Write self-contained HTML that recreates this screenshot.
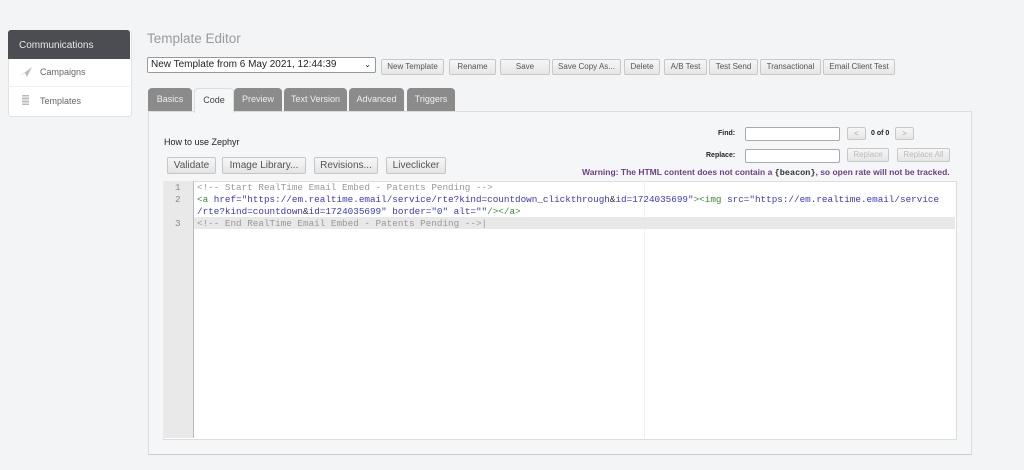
<!DOCTYPE html>
<html><head><style>
body{margin:0;width:1024px;height:470px;background:#f3f4f6;font-family:"Liberation Sans",sans-serif;position:relative;overflow:hidden;font-size:9px;color:#222}
.a{position:absolute}
.btn{position:absolute;height:14px;border:1px solid #c8c8c8;background:linear-gradient(#f6f6f6,#e6e6e6);font-size:8px;color:#555;text-align:center;line-height:14px;border-radius:2px;box-sizing:content-box}
.btn2{position:absolute;height:15px;border:1px solid #c6c6c6;background:linear-gradient(#f7f7f7,#e4e4e4);font-size:10px;color:#555;text-align:center;line-height:15px;border-radius:2px}
.tab{position:absolute;top:88px;height:23px;background:#8b8b8b;color:#eee;font-size:9px;text-align:center;line-height:22px;border-radius:4px 4px 0 0}
.code{font-family:"Liberation Mono",monospace;font-size:9.3px;position:absolute;left:197px;white-space:pre;line-height:12px}
</style></head><body>
<div class="a" style="left:8px;top:30px;width:122px;height:85px;background:#fff;border:1px solid #e2e2e2;border-radius:3px"></div>
<div class="a" style="left:8px;top:30px;width:122px;height:29px;background:#4b4d52;color:#e8e8e8;font-size:10px;line-height:31px;text-indent:11px;border-radius:3px 3px 0 0">Communications</div>
<div class="a" style="left:8px;top:86px;width:122px;border-top:1px solid #eee"></div>
<svg class="a" style="left:20px;top:67px" width="12" height="10"><path d="M0 9 L12 0 L7 10 L5 6 Z" fill="#bbb"/></svg>
<div class="a" style="left:40px;top:67px;font-size:9px;color:#666">Campaigns</div>
<div class="a" style="left:22px;top:95px;width:7px;height:10px;background:repeating-linear-gradient(#bbb 0 1px,#ddd 1px 3px)"></div>
<div class="a" style="left:40px;top:96px;font-size:9px;color:#666">Templates</div>

<div class="a" style="left:147px;top:31px;font-size:13.5px;color:#9a9a9a">Template Editor</div>
<div class="a" style="left:147px;top:57px;width:227px;height:14px;border:1px solid #999;background:#fff;font-size:10px;line-height:14px;text-indent:3px;border-radius:2px">New Template from 6 May 2021, 12:44:39<span style="position:absolute;right:4px;font-size:8px">&#8964;</span></div>
<div class="btn" style="left:381px;top:59px;width:61px">New Template</div>
<div class="btn" style="left:449px;top:59px;width:45px">Rename</div>
<div class="btn" style="left:500px;top:59px;width:48px">Save</div>
<div class="btn" style="left:552px;top:59px;width:67px">Save Copy As...</div>
<div class="btn" style="left:624px;top:59px;width:34px">Delete</div>
<div class="btn" style="left:664px;top:59px;width:41px">A/B Test</div>
<div class="btn" style="left:709px;top:59px;width:47px">Test Send</div>
<div class="btn" style="left:760px;top:59px;width:59px">Transactional</div>
<div class="btn" style="left:823px;top:59px;width:70px">Email Client Test</div>

<div class="a" style="left:148px;top:111px;width:822px;height:342px;border:1px solid #ddd;border-bottom:1px solid #ccc;background:#f5f6f8"></div>
<div class="tab" style="left:148px;width:44px">Basics</div>
<div class="tab" style="left:194px;width:38px;background:#f5f6f8;color:#444;border:1px solid #ddd;border-bottom:none;height:24px">Code</div>
<div class="tab" style="left:234px;width:48px">Preview</div>
<div class="tab" style="left:284px;width:63px">Text Version</div>
<div class="tab" style="left:349px;width:55px">Advanced</div>
<div class="tab" style="left:407px;width:48px">Triggers</div>

<div class="a" style="left:164px;top:137px;font-size:9px">How to use Zephyr</div>
<div class="btn2" style="left:167px;top:157px;width:47px">Validate</div>
<div class="btn2" style="left:222px;top:157px;width:82px">Image Library...</div>
<div class="btn2" style="left:314px;top:157px;width:62px">Revisions...</div>
<div class="btn2" style="left:386px;top:157px;width:58px">Liveclicker</div>

<div class="a" style="left:718px;top:130px;font-size:7px;font-weight:bold">Find:</div>
<div class="a" style="left:745px;top:127px;width:93px;height:12px;border:1px solid #aaa;background:#fff;border-radius:2px"></div>
<div class="btn" style="left:847px;top:127px;width:17px;height:11px;line-height:11px;color:#aaa">&lt;</div>
<div class="a" style="left:871px;top:130px;font-size:7px;font-weight:bold">0 of 0</div>
<div class="btn" style="left:895px;top:127px;width:17px;height:11px;line-height:11px;color:#aaa">&gt;</div>
<div class="a" style="left:706px;top:152px;font-size:7px;font-weight:bold">Replace:</div>
<div class="a" style="left:745px;top:149px;width:93px;height:12px;border:1px solid #aaa;background:#fff;border-radius:2px"></div>
<div class="btn" style="left:847px;top:148px;width:40px;height:12px;line-height:12px;color:#bbb">Replace</div>
<div class="btn" style="left:897px;top:148px;width:51px;height:12px;line-height:12px;color:#bbb">Replace All</div>
<div class="a" style="left:582px;top:167px;font-size:8.5px;font-weight:bold;color:#6b3f86">Warning: The HTML content does not contain a <span style="color:#333;font-family:'Liberation Mono',monospace">{beacon}</span>, so open rate will not be tracked.</div>

<div class="a" style="left:163px;top:181px;width:792px;height:257px;background:#fff;border:1px solid #ddd"></div>
<div class="a" style="left:163px;top:181px;width:30px;height:257px;background:#e9e9e9;border-right:1px solid #bbb"></div>
<div class="a" style="left:644px;top:181px;width:1px;height:257px;background:#f0f0f0"></div>
<div class="a" style="left:194px;top:217px;width:761px;height:12px;background:#e8e8e8"></div>
<div class="a" style="left:175px;top:182px;font-family:'Liberation Mono',monospace;font-size:9.3px;line-height:12px;color:#888">1<br>2<br><br>3</div>
<div class="code" style="top:182px;color:#999">&lt;!-- Start RealTime Email Embed - Patents Pending --&gt;</div>
<div class="code" style="top:194px;color:#3b37c8"><span style="color:#3a8a3a">&lt;a</span> href=<span>"https://em.realtime.email/service/rte?kind=countdown_clickthrough<span style="color:#333">&amp;</span>id=1724035699"</span><span style="color:#3a8a3a">&gt;&lt;img</span> src="https://em.realtime.email/service</div>
<div class="code" style="top:206px;color:#3b37c8">/rte?kind=countdown<span style="color:#333">&amp;</span>id=1724035699" border="0" alt=""<span style="color:#3a8a3a">/&gt;&lt;/a&gt;</span></div>
<div class="code" style="top:218px;color:#999">&lt;!-- End RealTime Email Embed - Patents Pending --&gt;|</div>
</body></html>
